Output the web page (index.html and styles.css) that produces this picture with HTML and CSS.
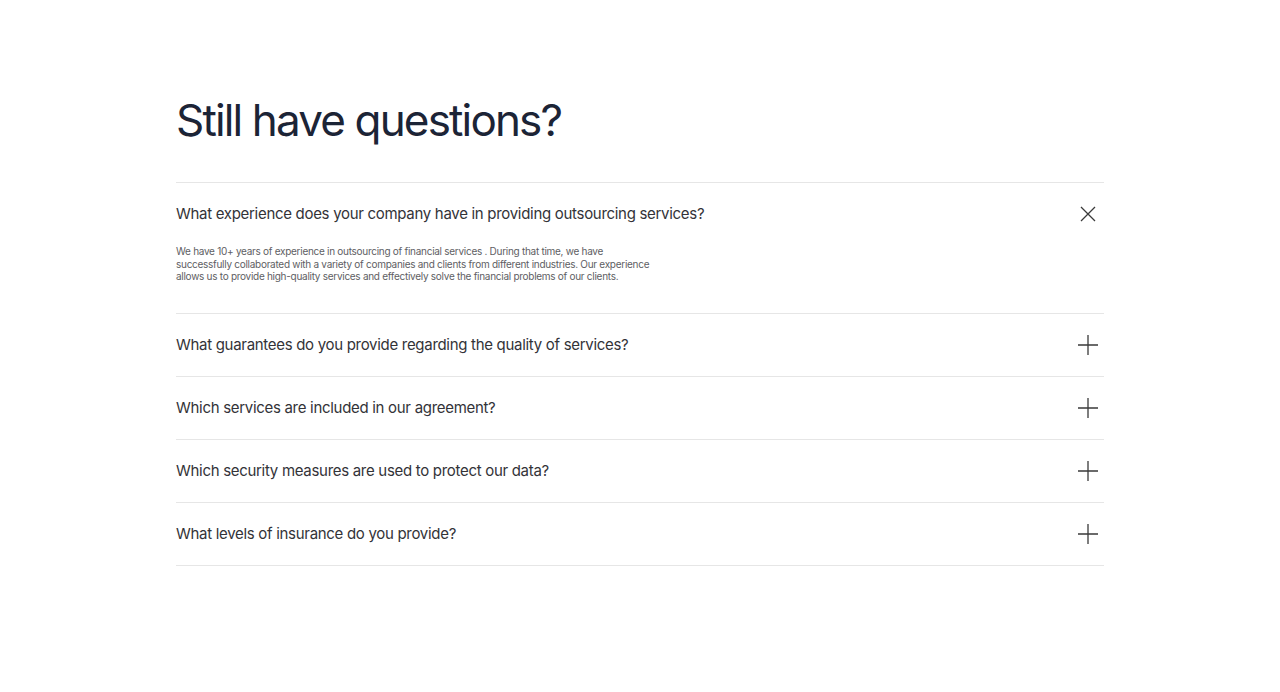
FILE: index.html
```html
<!DOCTYPE html>
<html lang="en">
<head>
<meta charset="utf-8">
<link rel="stylesheet" href="styles.css">
</head>
<body>
<section class="faq">
  <h1 class="faq-title">Still have questions?</h1>
  <div class="faq-list">
    <div class="faq-item open">
      <div class="faq-head">
        <span class="faq-q">What experience does your company have in providing outsourcing services?</span>
        <svg class="faq-icon" width="24" height="24" viewBox="0 0 24 24"><path d="M5 5 L19 19 M19 5 L5 19" stroke="#3a3a3a" stroke-width="1.3" fill="none"/></svg>
      </div>
      <p class="faq-a">We have 10+ years of experience in outsourcing of financial services . During that time, we have successfully collaborated with a variety of companies and clients from different industries. Our experience allows us to provide high-quality services and effectively solve the financial problems of our clients.</p>
    </div>
    <div class="faq-item">
      <div class="faq-head">
        <span class="faq-q">What guarantees do you provide regarding the quality of services?</span>
        <svg class="faq-icon" width="24" height="24" viewBox="0 0 24 24"><path d="M12 2 V22 M2 12 H22" stroke="#3a3a3a" stroke-width="1.3" fill="none"/></svg>
      </div>
    </div>
    <div class="faq-item">
      <div class="faq-head">
        <span class="faq-q">Which services are included in our agreement?</span>
        <svg class="faq-icon" width="24" height="24" viewBox="0 0 24 24"><path d="M12 2 V22 M2 12 H22" stroke="#3a3a3a" stroke-width="1.3" fill="none"/></svg>
      </div>
    </div>
    <div class="faq-item">
      <div class="faq-head">
        <span class="faq-q">Which security measures are used to protect our data?</span>
        <svg class="faq-icon" width="24" height="24" viewBox="0 0 24 24"><path d="M12 2 V22 M2 12 H22" stroke="#3a3a3a" stroke-width="1.3" fill="none"/></svg>
      </div>
    </div>
    <div class="faq-item">
      <div class="faq-head">
        <span class="faq-q">What levels of insurance do you provide?</span>
        <svg class="faq-icon" width="24" height="24" viewBox="0 0 24 24"><path d="M12 2 V22 M2 12 H22" stroke="#3a3a3a" stroke-width="1.3" fill="none"/></svg>
      </div>
    </div>
  </div>
</section>
</body>
</html>
```
FILE: styles.css
```css
* { box-sizing: border-box; }
html, body { margin: 0; padding: 0; background: #fff; }
body { font-family: Inter, "Noto Sans", sans-serif; }
.faq {
  width: 928px;
  margin: 0 auto;
  padding-top: 90px;
}
.faq-title {
  margin: 0 0 32px;
  font-size: 44px;
  line-height: 60px;
  font-weight: 400;
  color: #1c2436;
  letter-spacing: -1.85px;
}
.faq-list { border-bottom: 1px solid #e6e6e6; }
.faq-item { border-top: 1px solid #e6e6e6; }
.faq-head {
  display: flex;
  align-items: center;
  justify-content: space-between;
  padding: 19px 4px 19px 0;
}
.faq-q {
  font-size: 15px;
  line-height: 24px;
  letter-spacing: -0.3px;
  color: #333338;
}
.faq-icon { display: block; }
.faq-a {
  margin: 0;
  padding: 0 0 30px;
  max-width: 480px;
  font-size: 10px;
  line-height: 12.5px;
  letter-spacing: -0.28px;
  color: #5e5e63;
}
```
